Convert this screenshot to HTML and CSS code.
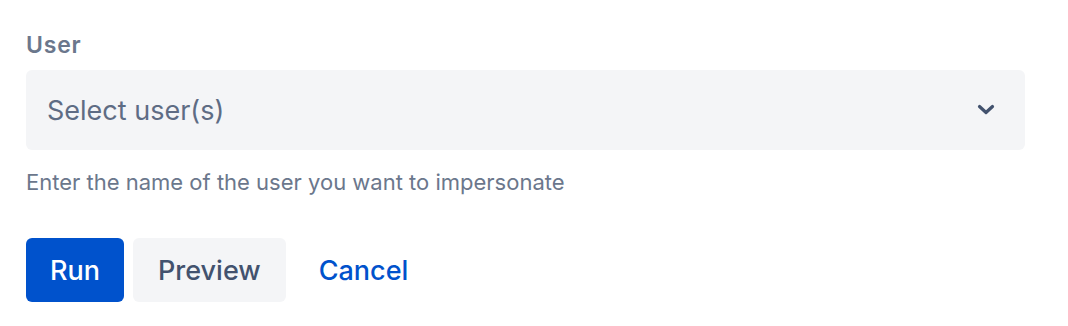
FILE: index.html
```html
<!DOCTYPE html>
<html>
<head>
<meta charset="utf-8">
<link rel="stylesheet" href="styles.css">
</head>
<body>
<div class="form">
  <label class="label">User</label>
  <div class="select">
    <span class="placeholder">Select user(s)</span>
    <svg class="chevron" width="20" height="14" viewBox="0 0 20 14"><path d="M3.5 3.5 L10 9.5 L16.5 3.5" fill="none" stroke="#42526E" stroke-width="3.2" stroke-linecap="round" stroke-linejoin="round"/></svg>
  </div>
  <div class="helper">Enter the name of the user you want to impersonate</div>
  <div class="actions">
    <button class="btn primary">Run</button>
    <button class="btn secondary">Preview</button>
    <button class="btn link">Cancel</button>
  </div>
</div>
</body>
</html>
```
FILE: styles.css
```css
html, body { margin: 0; padding: 0; background: #fff; }
body { font-family: Inter, "Noto Sans", sans-serif; }
.form { padding: 30px 0 0 26px; width: 999px; display: flex; flex-direction: column; }
.label { font-size: 23px; font-weight: 600; color: #6B778C; line-height: 30px; letter-spacing: 0.8px; }
.select { margin-top: 10px; height: 80px; background: #F4F5F7; border-radius: 6px; display: flex; align-items: center; justify-content: space-between; padding: 0 29px 0 21px; box-sizing: border-box; }
.placeholder { font-size: 27px; color: #5E6C84; }
.chevron { display: block; }
.helper { margin-top: 19px; font-size: 22px; color: #6B778C; line-height: 26px; }
.actions { margin-top: 43px; display: flex; gap: 9px; }
.btn { font-family: inherit; font-size: 27px; font-weight: 500; border: none; border-radius: 6px; height: 64px; padding: 0 24px; cursor: pointer; }
.primary { background: #0052CC; color: #fff; }
.secondary { background: #F4F5F7; color: #42526E; padding: 0 25px; }
.link { background: transparent; color: #0052CC; padding: 0 24px; }
```
